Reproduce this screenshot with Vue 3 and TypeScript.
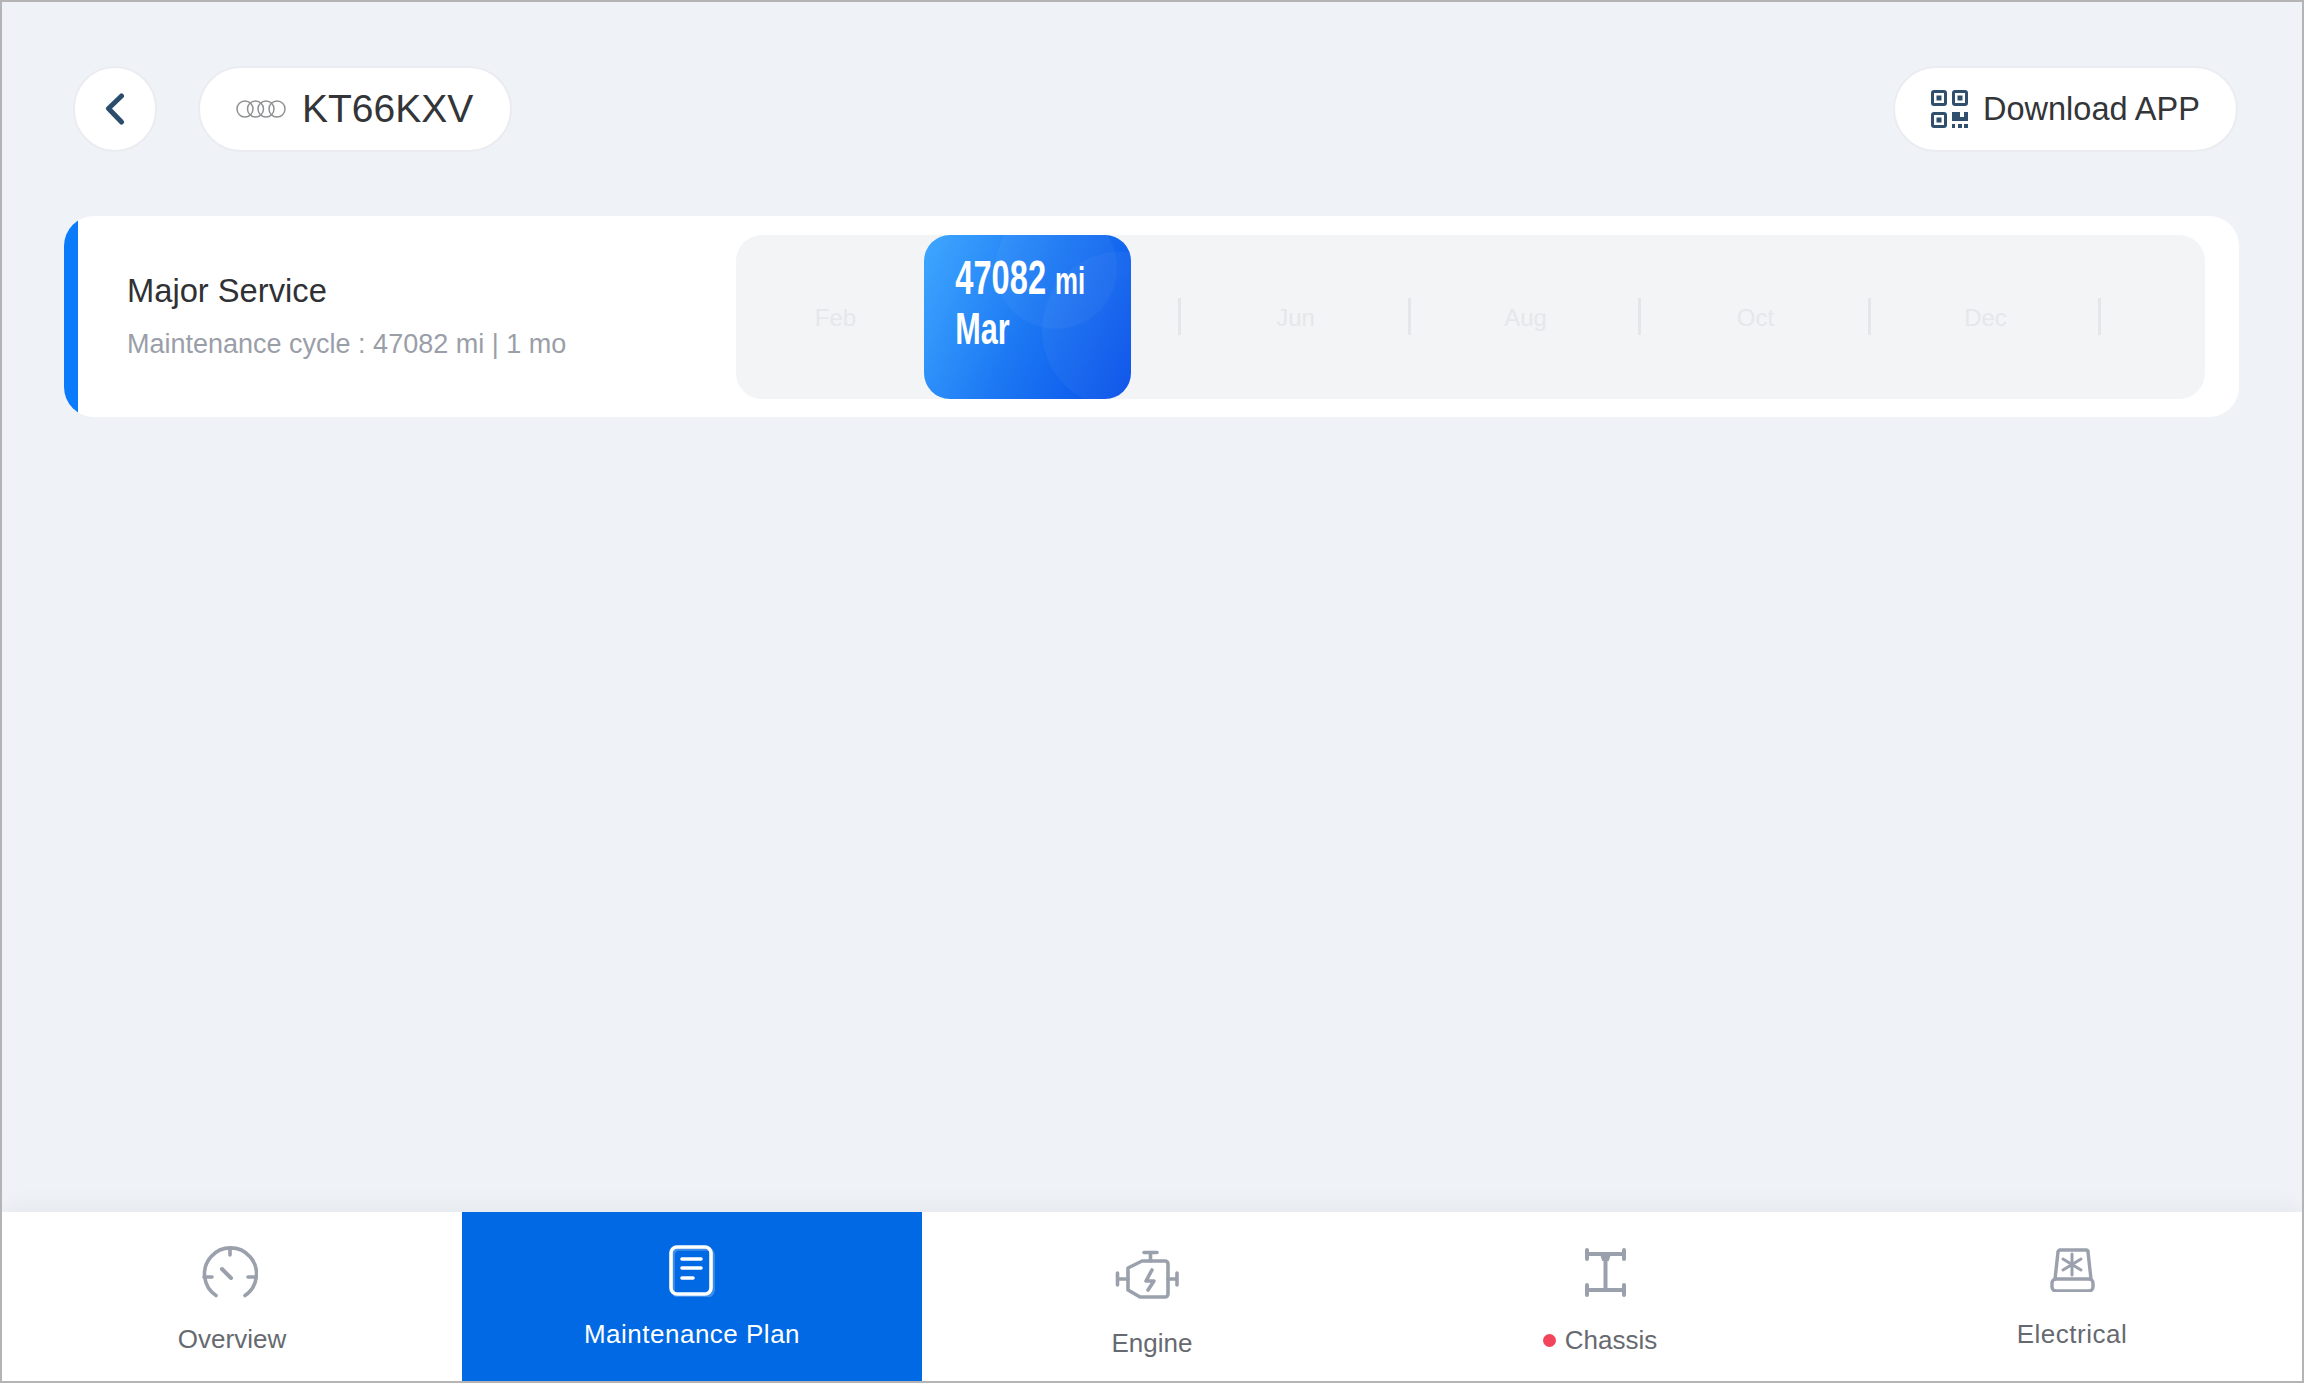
<template>
  <div class="pagina">
    <header class="topo">
      <div class="topo-esq">
        <button class="btn-voltar">
          <svg width="20" height="32" viewBox="0 0 20 32" fill="none">
            <path d="M16.5 3 3.5 15.5 16.5 29" stroke="#2c4c6b" stroke-width="5" stroke-linecap="round" stroke-linejoin="round" />
          </svg>
        </button>
        <div class="placa">
          <svg width="50" height="18" viewBox="0 0 50 18" fill="none" stroke="#8f9193" stroke-width="1.5">
            <circle cx="9" cy="9" r="8" />
            <circle cx="19.5" cy="9" r="8" />
            <circle cx="30" cy="9" r="8" />
            <circle cx="41" cy="9" r="8" />
          </svg>
          <span>KT66KXV</span>
        </div>
      </div>

      <button class="btn-download">
        <svg width="37" height="38" viewBox="0 0 37 38" fill="#2f4f6d">
          <rect x="1.5" y="1.5" width="13" height="13" rx="1.5" fill="none" stroke="#2f4f6d" stroke-width="3" />
          <rect x="22.5" y="1.5" width="13" height="13" rx="1.5" fill="none" stroke="#2f4f6d" stroke-width="3" />
          <rect x="1.5" y="23.5" width="13" height="13" rx="1.5" fill="none" stroke="#2f4f6d" stroke-width="3" />
          <rect x="5.5" y="5.5" width="5" height="5" />
          <rect x="26.5" y="5.5" width="5" height="5" />
          <rect x="5.5" y="27.5" width="5" height="5" />
          <path d="M21 22h8v5h4v-5h4v9H21z" />
          <rect x="21" y="34" width="3" height="4" />
          <rect x="27" y="34" width="4" height="4" />
          <rect x="33" y="34" width="4" height="4" />
        </svg>
        <span>Download APP</span>
      </button>
    </header>

    <section class="cartao">
      <div class="faixa"></div>
      <div class="info">
        <div class="titulo">Major Service</div>
        <div class="ciclo">Maintenance cycle : 47082 mi | 1 mo</div>
      </div>
      <div class="linha-tempo">
        <div class="meses">
          <div v-for="mes in meses" :key="mes" class="mes">
            <span class="mes-nome">{{ mes }}</span>
            <i class="marca"></i>
          </div>
        </div>
        <div class="destaque">
          <i class="bola bola-a"></i>
          <i class="bola bola-b"></i>
          <div class="destaque-texto">
            <div class="km">47082 <small>mi</small></div>
            <div class="km mes-atual">Mar</div>
          </div>
        </div>
      </div>
    </section>

    <nav class="abas">
      <div class="aba aba-overview">
        <svg class="icone" width="56" height="52" viewBox="0 0 56 52" fill="none" stroke="#9aa0ac" stroke-width="3.6" stroke-linecap="round">
          <path d="M14 49.5A26 26 0 1 1 43 49.5" />
          <path d="M28 2v7M2 31h8M46 31h8" />
          <path d="M20 23l9 9" stroke-width="4" />
        </svg>
        <span class="rotulo">Overview</span>
      </div>

      <div class="aba aba-plano ativa">
        <svg class="icone" width="46" height="52" viewBox="0 0 46 52" fill="none">
          <rect x="4" y="4" width="40" height="47" rx="6" stroke="#fff" stroke-opacity=".25" stroke-width="3.6" />
          <rect x="2" y="2" width="40" height="47" rx="6" stroke="#fff" stroke-width="3.6" />
          <path d="M13 14h19M13 23h19M13 33h11" stroke="#fff" stroke-width="3.6" stroke-linecap="round" />
        </svg>
        <span class="rotulo">Maintenance Plan</span>
      </div>

      <div class="aba aba-motor">
        <svg class="icone" width="65" height="50" viewBox="0 0 65 50" fill="none" stroke="#9aa0ac" stroke-width="3.6" stroke-linecap="round" stroke-linejoin="round">
          <path d="M29 2.5h13M35.5 2.5V11" />
          <path d="M27 11H50a3 3 0 0 1 3 3V44a3 3 0 0 1-3 3H25L13 40V18Z" />
          <path d="M2.5 23V35M2.5 29H13M62 23V35M53 29H62" />
          <path d="M37 20l-6 11h8l-6 9" />
        </svg>
        <span class="rotulo">Engine</span>
      </div>

      <div class="aba aba-chassi">
        <svg class="icone" width="43" height="49" viewBox="0 0 43 49" fill="none" stroke="#9aa0ac" stroke-width="4" stroke-linecap="round">
          <path d="M3 2v9M40 2v9M3 37v10M40 37v10" />
          <path d="M3 6h37M3 42h37" />
          <path d="M21.5 6V42" />
          <path d="M17 6h9l-2 6h-5z" fill="#9aa0ac" stroke-width="2" />
        </svg>
        <span class="rotulo"><i class="ponto"></i>Chassis</span>
      </div>

      <div class="aba aba-eletrica">
        <svg class="icone" width="45" height="44" viewBox="0 0 45 44" fill="none" stroke="#9aa0ac" stroke-width="3.4" stroke-linecap="round" stroke-linejoin="round">
          <path d="M5 31 8 4a2 2 0 0 1 2-2H36a2 2 0 0 1 2 2L41 31" />
          <rect x="2" y="31" width="41" height="12" rx="4" />
          <path d="M22 6V27M13 11l18 11M31 11 13 22" stroke-width="3" />
        </svg>
        <span class="rotulo">Electrical</span>
      </div>
    </nav>
  </div>
</template>

<script setup lang="ts">
const meses: string[] = ['Feb', 'Apr', 'Jun', 'Aug', 'Oct', 'Dec']
</script>

<style>
html, body {
  margin: 0;
  padding: 0;
}
</style>

<style scoped>
.pagina {
  box-sizing: border-box;
  width: 2304px;
  height: 1383px;
  display: flex;
  flex-direction: column;
  overflow: hidden;

  background: #eff2f6;
  border: 2px solid #b4b4b4;
  font-family: "Liberation Sans", Arial, sans-serif;
  color: #333538;
}

.topo {
  display: flex;
  justify-content: space-between;
  align-items: center;
  padding: 64px 64px 0 71px;
}

.topo-esq {
  display: flex;
  align-items: center;
  gap: 41px;
}

.btn-voltar,
.placa,
.btn-download {
  box-sizing: border-box;
  height: 86px;
  display: flex;
  align-items: center;
  background: #fff;
  border: 2px solid #eaecf1;
  border-radius: 43px;
  font-family: inherit;
  color: inherit;
}

.btn-voltar {
  width: 84px;
  justify-content: center;
  padding: 0;
}

.placa {
  width: 314px;
  padding: 0 36px;
  gap: 16px;
  font-size: 39px;
}

.btn-download {
  width: 345px;
  padding: 0 36px;
  gap: 15px;
  font-size: 32.5px;
}

.cartao {
  display: flex;
  align-items: center;
  height: 201px;
  margin: 64px 63px 0 62px;

  background: #fff;
  border-radius: 30px;
  overflow: hidden;
}

.faixa {
  align-self: stretch;
  flex: 0 0 14px;
  background: #0a7bfb;
}

.info {
  box-sizing: border-box;
  flex: 0 0 658px;
  padding: 0 0 2px 49px;
}

.titulo {
  font-size: 32.7px;
  line-height: 40px;
  color: #2f3134;
}

.ciclo {
  margin-top: 17px;
  font-size: 27px;
  line-height: 32px;
  color: #9a9ea8;
}

.linha-tempo {
  position: relative;
  flex: 1;
  height: 164px;
  margin-right: 34px;

  background: #f3f4f6;
  border-radius: 26px;
  overflow: hidden;
}

.meses {
  display: flex;
  height: 100%;
  margin-left: -15.5px;
}

.mes {
  flex: 0 0 230px;
  display: flex;
  align-items: center;
}

.mes-nome {
  flex: 1;
  padding: 2px 0 0 3px;
  text-align: center;
  font-size: 24px;
  color: #e6e7ea;
}

.marca {
  width: 3px;
  height: 37px;
  background: #e5e6e9;
}

.destaque {
  position: absolute;
  top: 0;
  left: 188px;
  width: 207px;
  height: 100%;
  overflow: hidden;

  background: linear-gradient(115deg, #3fa8ff 0%, #1c78f3 50%, #0850ea 100%);
  border-radius: 26px;
  color: #fff;
}

.bola {
  position: absolute;
  border-radius: 50%;
  background: rgba(255, 255, 255, 0.04);
}

.bola-a {
  left: 71px;
  top: -28px;
  width: 122px;
  height: 122px;
}

.bola-b {
  left: 118px;
  top: 17px;
  width: 156px;
  height: 156px;
}

.destaque-texto {
  position: relative;
  padding: 17px 0 0 46px;
  transform: scaleX(0.68);
  transform-origin: left top;
  white-space: nowrap;
}

.km {
  font-size: 48px;
  font-weight: 700;
  line-height: 51px;
}

.km small {
  font-size: 38px;
  line-height: 1;
}

.mes-atual {
  font-size: 45px;
}

.abas {
  display: flex;
  height: 169px;
  margin-top: auto;

  background: #fff;
  box-shadow: 0 -4px 24px rgba(0, 0, 0, 0.05);
}

.aba {
  flex: 1;
  display: flex;
  flex-direction: column;
  align-items: center;
}

.rotulo {
  display: flex;
  align-items: center;
  font-size: 26px;
  line-height: 30px;
  color: #666a70;
}

.ativa {
  background: #0069e3;
}

.ativa .rotulo {
  color: #fff;
  letter-spacing: 0.5px;
}

.aba-overview {
  padding-top: 34px;
}

.aba-overview .icone {
  margin-right: 5px;
}

.aba-overview .rotulo {
  margin-top: 26px;
}

.aba-plano {
  padding-top: 33px;
}

.aba-plano .rotulo {
  margin-top: 22px;
}

.aba-motor {
  padding-top: 38px;
}

.aba-motor .icone {
  margin-right: 10px;
}

.aba-motor .rotulo {
  margin-top: 28px;
}

.aba-chassi {
  padding-top: 36px;
}

.aba-chassi .icone {
  margin-right: 14px;
}

.aba-chassi .rotulo {
  margin: 28px 24px 0 0;
}

.ponto {
  width: 13px;
  height: 13px;
  margin-right: 9px;
  background: #f2445a;
  border-radius: 50%;
}

.aba-eletrica {
  padding-top: 36px;
}

.aba-eletrica .rotulo {
  margin-top: 27px;
  letter-spacing: 0.5px;
}
</style>
